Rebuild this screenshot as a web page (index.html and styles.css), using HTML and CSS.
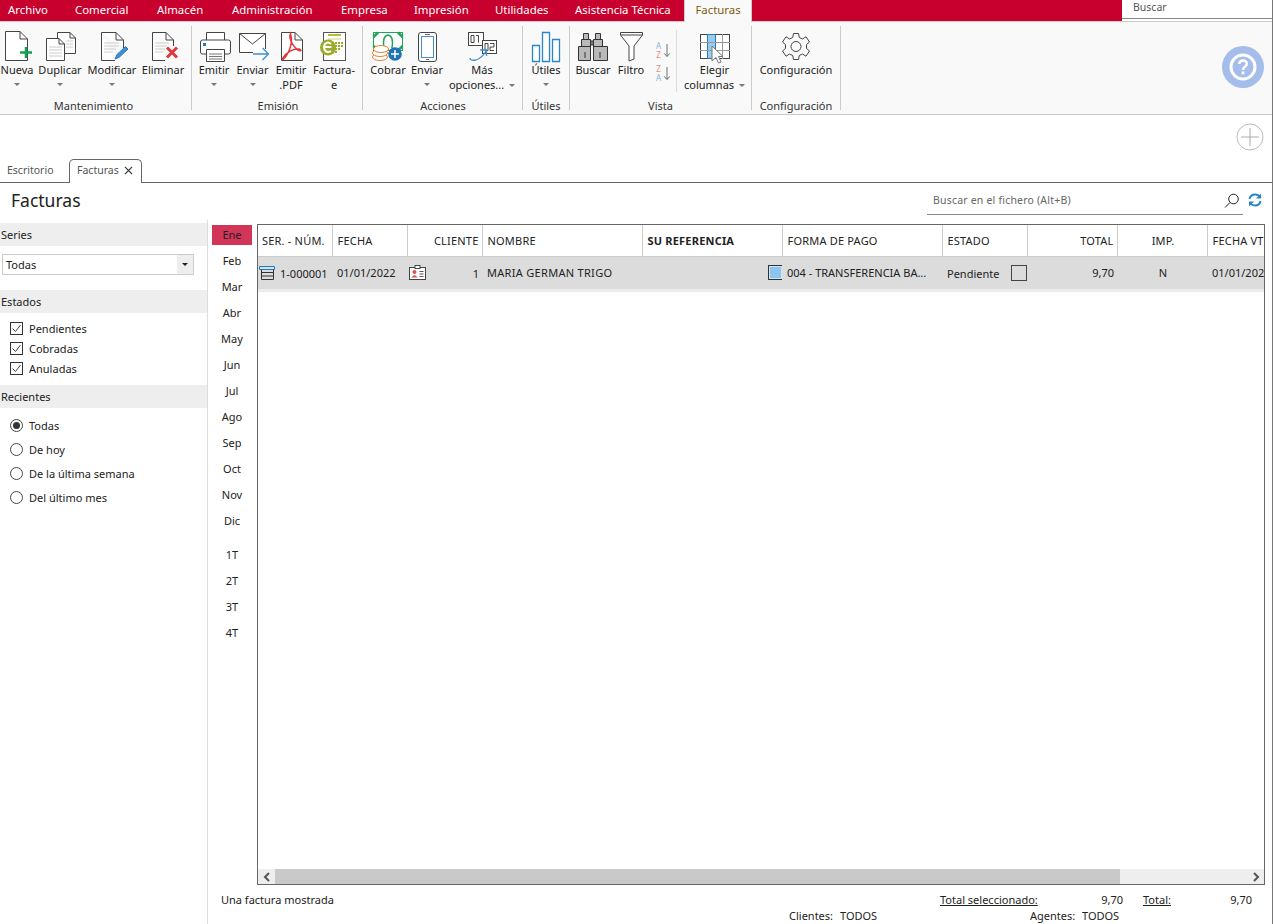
FILE: index.html
```html
<!DOCTYPE html>
<html lang="es">
<head>
<meta charset="utf-8">
<title>Facturas</title>
<link rel="stylesheet" href="styles.css">
</head>
<body>
<div class="app">
  <nav class="menubar">
    <a class="m m-archivo">Archivo</a><a class="m m-comercial">Comercial</a><a class="m m-almacen">Almacén</a><a class="m m-admin">Administración</a><a class="m m-empresa">Empresa</a><a class="m m-impresion">Impresión</a><a class="m m-util">Utilidades</a><a class="m m-asist">Asistencia Técnica</a><a class="m m-fact">Facturas</a>
    <div class="mspacer"></div>
    <div class="topsearch"><div class="tsbox">Buscar</div></div>
  </nav>
  <section class="ribbon">
    <div class="group g1">
      <div class="btns">
        <div class="btn w34"><svg class="ico" viewBox="0 0 36 32"><path class="pg" d="M6.5 1.5H21L28.5 9V30.500H6.500Z M21 1.500V9H28.500"/><path d="M27 17V28M21 22.500H33" stroke="#12a150" stroke-width="2.500" fill="none"/></svg><span>Nueva</span><i class="car"></i></div>
        <div class="btn w52"><svg class="ico" viewBox="0 0 36 32"><path class="pg" d="M15.500 8V2.500H28L33.500 8V23.500H22.500 M28 2.500V8H33.500"/><path class="lt" d="M24 11H31M24 14H31M24 17H31"/><path class="pg" d="M4.500 8.500H17L22.500 14V30.500H4.500Z M17 8.500V14H22.500"/><path class="lt" d="M7 17H20M7 20H20M7 23H20M7 26H20"/></svg><span>Duplicar</span><i class="car"></i></div>
        <div class="btn w52"><svg class="ico" viewBox="0 0 36 32"><path class="pg" d="M7.500 2.500H22L29.500 10V18M21 30.500H7.500V2.500 M22 2.500V10H29.500"/><path class="lt" d="M10 13H25M10 16H25M10 19H22M10 22H19"/><path d="M21 29L23 24.500L31.500 16.500L34 19L25.500 27Z" fill="#3f8fd2" stroke="#2a78bd"/></svg><span>Modificar</span><i class="car"></i></div>
        <div class="btn w50"><svg class="ico" viewBox="0 0 36 32"><path class="pg" d="M7.500 2.500H21L28.500 10V16M20 30.500H7.500V2.500 M21 2.500V10H28.500"/><path class="lt" d="M10 13H24M10 16H22M10 19H20M10 22H18"/><path d="M22 17.500L32 27.500M32 17.500L22 27.500" stroke="#e0383c" stroke-width="3" fill="none"/></svg><span>Eliminar</span></div>
      </div>
      <div class="glabel">Mantenimiento</div>
    </div>
    <div class="group g2">
      <div class="btns">
        <div class="btn w42"><svg class="ico" viewBox="0 0 36 32"><path class="pg" d="M10.500 10V2.500H28.500V10"/><path class="pg" d="M10 24H6.500Q4.500 24 4.500 22V12Q4.500 10 6.500 10H32.500Q34.500 10 34.500 12V22Q34.500 24 32.500 24H29"/><rect x="7" y="13" width="3" height="3" fill="#2a78bd"/><path class="pg" d="M10.500 19.500H28.500V31.500H10.500Z"/><path d="M13 24H26M13 26.500H26M13 29H26" stroke="#777" fill="none"/></svg><span>Emitir</span><i class="car"></i></div>
        <div class="btn w35"><svg class="ico" viewBox="0 0 36 32"><path class="pg" d="M30.500 19V3.500H4.500V22.500H18 M4.500 3.500L17.500 14L30.500 3.500"/><path d="M18 24H33M27.500 18L33.500 24L27.500 30" stroke="#3f8fd2" stroke-width="1.300" fill="none"/></svg><span>Enviar</span><i class="car"></i></div>
        <div class="btn w42"><svg class="ico" viewBox="0 0 36 32"><path class="pg" d="M8.500 2.500H22L29.500 10V30.500H8.500Z M22 2.500V10H29.500"/><path d="M17.500 3.500C15.500 8 19 15 24 19.500C27 22 30 20 26 19C20 18.500 13.500 22 10 28C8 31 12 29 15 23C17.500 18 19.500 10 17.500 3.500Z" fill="none" stroke="#e0383c" stroke-width="1.500"/></svg><span>Emitir<br>.PDF</span></div>
        <div class="btn w44"><svg class="ico" viewBox="0 0 36 32"><rect x="7.500" y="2.500" width="22" height="28" fill="#fff" stroke="#555"/><path d="M12 5H25" stroke="#b3c035" stroke-width="2"/><path d="M12 9H25" stroke="#c9d26b" stroke-width="1"/><circle cx="12" cy="17.500" r="8" fill="#9bab2a"/><path d="M8.500 17H15.500M15 14Q12 11 9 14Q7 18 9.500 21Q12 23 15 21" stroke="#fff" stroke-width="2" fill="none"/><g fill="#9bab2a"><rect x="19" y="12" width="2" height="2"/><rect x="22" y="12" width="2" height="2"/><rect x="25" y="12" width="2" height="2"/><rect x="19" y="15" width="2" height="2"/><rect x="22" y="15" width="2" height="2"/><rect x="25" y="15" width="2" height="2"/><rect x="19" y="18" width="2" height="2"/><rect x="22" y="18" width="2" height="2"/><rect x="19" y="21" width="2" height="2"/></g></svg><span>Factura-<br>e</span></div>
      </div>
      <div class="glabel">Emisión</div>
    </div>
    <div class="group g3">
      <div class="btns">
        <div class="btn w40"><svg class="ico" viewBox="0 0 36 32"><rect x="3.500" y="2.500" width="29" height="18" fill="#fff" stroke="#1fa45b"/><path d="M3.500 7L8 2.500M28 2.500L32.500 7M3.500 16L8 20.500M28 20.500L32.500 16" stroke="#1fa45b" stroke-width="2.500"/><path d="M14 18Q12 6 18 5Q24 6 22 18" fill="none" stroke="#1fa45b" stroke-width="1.500"/><g fill="#fff" stroke="#e87f2e"><ellipse cx="10" cy="27" rx="7.500" ry="3.500"/><ellipse cx="10" cy="23" rx="7.500" ry="3.500"/><ellipse cx="11" cy="19" rx="7.500" ry="3.500"/></g><circle cx="25" cy="24" r="6.800" fill="#1e73b4"/><path d="M25 20V28M21 24H29" stroke="#fff" stroke-width="1.500"/></svg><span>Cobrar</span></div>
        <div class="btn w38"><svg class="ico" viewBox="0 0 36 32"><rect x="9.500" y="2.500" width="18" height="29" rx="2.500" fill="#fff" stroke="#444"/><rect x="12.500" y="6.500" width="12" height="21" fill="#fff" stroke="#3f8fd2"/><path d="M16 4.500H21M17 29.500H20" stroke="#666"/></svg><span>Enviar</span><i class="car"></i></div>
        <div class="btn w72"><svg class="ico" viewBox="0 0 36 32"><rect x="4.500" y="2.500" width="15" height="13" fill="#fff" stroke="#444"/><path d="M7 5.500H10V12.500H7ZM12 5.500H14.500V12.500" fill="none" stroke="#444"/><rect x="18.500" y="10.500" width="14" height="13" fill="#fff" stroke="#444"/><path d="M21 13.500H24V20.500H21ZM26 13.500H30V17H26V20.500H30" fill="none" stroke="#444"/><path d="M6 28Q6 31 12 30Q18 28 22 21M16 20H22.500V26" fill="none" stroke="#3f8fd2" stroke-width="1.300"/></svg><span>Más<br>opciones... <i class="car inl"></i></span></div>
      </div>
      <div class="glabel">Acciones</div>
    </div>
    <div class="group g4">
      <div class="btns">
        <div class="btn w46"><svg class="ico" viewBox="0 0 36 32"><path d="M4.500 15.500H11.500V31.500H4.500ZM14.500 2.500H21.500V31.500H14.500ZM24.500 9.500H31.500V31.500H24.500Z" fill="#fff" stroke="#2a85c9" stroke-width="1.300"/></svg><span>Útiles</span><i class="car"></i></div>
      </div>
      <div class="glabel">Útiles</div>
    </div>
    <div class="group g5">
      <div class="btns">
        <div class="btn w46"><svg class="ico" viewBox="0 0 36 32"><path d="M8.500 3.500H13.500V9.500H8.500ZM20.500 3.500H25.500V9.500H20.500Z M6.500 9.500H15.500V16.500H6.500ZM18.500 9.500H27.500V16.500H18.500Z M3.500 16.500H15.500V30.500H3.500ZM18.500 16.500H32.500V30.500H18.500Z" fill="#b9b9b9" stroke="#333"/><path d="M15.500 11H18.500V15H15.500Z" fill="#777" stroke="#333"/><path d="M10 22V28M25 22V28" stroke="#333"/></svg><span>Buscar</span></div>
        <div class="btn w30"><svg class="ico" viewBox="0 0 36 32"><path d="M7.500 2.500H29.500V5L21 16V29L16 31V16L7.500 5Z M7.500 5H29.500" fill="#fff" stroke="#444"/></svg><span>Filtro</span></div>
        <div class="sorts"><div class="sort"><span class="az"><b class="sa">A</b><b class="sz">Z</b></span><svg class="arr" viewBox="0 0 8 16"><path d="M4 1V14M1 11L4 14.500L7 11" fill="none" stroke="#666"/></svg></div><div class="sort"><span class="az"><b class="sz">Z</b><b class="sa">A</b></span><svg class="arr" viewBox="0 0 8 16"><path d="M4 1V14M1 11L4 14.500L7 11" fill="none" stroke="#666"/></svg></div></div>
        <div class="btn w74 sepl"><svg class="ico" viewBox="0 0 36 32"><rect x="3.500" y="4.500" width="29" height="24" fill="#fff" stroke="#444"/><rect x="10.500" y="4.500" width="8" height="24" fill="#9accee" stroke="#2a78bd"/><path d="M3 12.500H33M3 20.500H33M25.500 4V29" stroke="#999" fill="none"/><path d="M15 16V31L19 27.500L21.500 33L24 32L21.500 26.500H26Z" fill="#fff" stroke="#777"/></svg><span>Elegir<br>columnas <i class="car inl"></i></span></div>
      </div>
      <div class="glabel">Vista</div>
    </div>
    <div class="group g6">
      <div class="btns">
        <div class="btn w88"><svg class="ico" viewBox="0 0 36 32"><path d="M15.500 3.500H20.500L21.300 7.500L24.500 9L28 6.800L31.500 12L28.500 14.500V18.500L31.500 21L28 26.200L24.500 24L21.300 25.500L20.500 29.500H15.500L14.700 25.500L11.500 24L8 26.200L4.500 21L7.500 18.500V14.500L4.500 12L8 6.800L11.500 9L14.700 7.500Z" fill="none" stroke="#444" stroke-linejoin="round"/><circle cx="18" cy="16.500" r="5" fill="none" stroke="#444"/></svg><span>Configuración</span></div>
      </div>
      <div class="glabel">Configuración</div>
    </div>
    <div class="help"><svg viewBox="0 0 42 42" class="helpico"><circle cx="21" cy="21" r="21" fill="#a5bdeb"/><circle cx="21" cy="21" r="12" fill="none" stroke="#fff" stroke-width="3"/><path d="M17.300 18Q17.500 14.500 21 14.500Q24.800 14.500 24.800 17.800Q24.800 19.800 22.800 20.800Q21 21.800 21 24" fill="none" stroke="#fff" stroke-width="2.500"/><rect x="19.600" y="25.500" width="2.800" height="2.800" fill="#fff"/></svg></div>
  </section>
  <div class="strip"><svg class="addico" viewBox="0 0 28 28"><circle cx="14" cy="14" r="13" fill="#fff" stroke="#bbb"/><path d="M14 5V23M5 14H23" stroke="#aaa"/></svg></div>
  <div class="tabs">
    <div class="tab">Escritorio</div>
    <div class="tab active">Facturas <svg class="x" viewBox="0 0 10 10"><path d="M1 1L9 9M9 1L1 9" stroke="#333" stroke-width="1.300"/></svg></div>
  </div>
  <header class="titlerow">
    <h1>Facturas</h1>
    <div class="fsearch"><span>Buscar en el fichero (Alt+B)</span><svg class="lens" viewBox="0 0 16 16"><circle cx="9.500" cy="6" r="4.800" fill="none" stroke="#222"/><path d="M6 9.500L1 14.500" stroke="#222"/></svg></div>
    <svg class="refresh" viewBox="0 0 14 14"><path d="M1.500 6Q2.500 1.500 7 1.500Q10 1.500 11.500 3.500M12.500 8Q11.500 12.500 7 12.500Q4 12.500 2.500 10.500" fill="none" stroke="#2a85c9" stroke-width="2"/><path d="M13 0.500V5.500H8ZM1 13.500V8.500H6Z" fill="#2a85c9"/></svg>
  </header>
  <div class="content">
    <aside class="side">
      <div class="sh">Series</div>
      <div class="select"><span>Todas</span><b class="selbtn"></b></div>
      <div class="sh sh2">Estados</div>
      <ul class="checks">
        <li><svg class="cb" viewBox="0 0 13 13"><rect x=".5" y=".5" width="12" height="12" fill="#fff" stroke="#333"/><path d="M2.500 6.500L5.500 9.500L10.500 3" fill="none" stroke="#444"/></svg>Pendientes</li>
        <li><svg class="cb" viewBox="0 0 13 13"><rect x=".5" y=".5" width="12" height="12" fill="#fff" stroke="#333"/><path d="M2.500 6.500L5.500 9.500L10.500 3" fill="none" stroke="#444"/></svg>Cobradas</li>
        <li><svg class="cb" viewBox="0 0 13 13"><rect x=".5" y=".5" width="12" height="12" fill="#fff" stroke="#333"/><path d="M2.500 6.500L5.500 9.500L10.500 3" fill="none" stroke="#444"/></svg>Anuladas</li>
      </ul>
      <div class="sh">Recientes</div>
      <ul class="radios">
        <li><i class="radio on"></i>Todas</li>
        <li><i class="radio"></i>De hoy</li>
        <li><i class="radio"></i>De la última semana</li>
        <li><i class="radio"></i>Del último mes</li>
      </ul>
    </aside>
    <div class="rightpane">
      <div class="work">
        <div class="months">
          <div class="mo on"><span>Ene</span></div><div class="mo"><span>Feb</span></div><div class="mo"><span>Mar</span></div><div class="mo"><span>Abr</span></div><div class="mo"><span>May</span></div><div class="mo"><span>Jun</span></div><div class="mo"><span>Jul</span></div><div class="mo"><span>Ago</span></div><div class="mo"><span>Sep</span></div><div class="mo"><span>Oct</span></div><div class="mo"><span>Nov</span></div><div class="mo"><span>Dic</span></div>
          <div class="mo q1"><span>1T</span></div><div class="mo"><span>2T</span></div><div class="mo"><span>3T</span></div><div class="mo"><span>4T</span></div>
        </div>
        <div class="gridbox">
          <div class="gridscroll">
            <table class="gt">
              <colgroup><col class="c74"><col class="c75"><col class="c75"><col class="c160"><col class="c140"><col class="c160"><col class="c85"><col class="c90"><col class="c90"><col class="c100"></colgroup>
              <thead><tr><th class="first">SER. - NÚM.</th><th>FECHA</th><th class="r">CLIENTE</th><th>NOMBRE</th><th class="bold">SU REFERENCIA</th><th>FORMA DE PAGO</th><th>ESTADO</th><th class="r">TOTAL</th><th class="ctr">IMP.</th><th>FECHA VTO.</th></tr></thead>
              <tbody><tr>
                <td class="num"><svg class="rowico" viewBox="0 0 16 14"><path d="M.5 .5H15.500V3.500H.5Z" fill="#cfe4f5" stroke="#2a78bd"/><path d="M2.500 3.500V13.500H14.500V3.500M2.500 6.500H14.500M2.500 10H14.500" fill="none" stroke="#333"/></svg><span>1-000001</span></td>
                <td>01/01/2022</td>
                <td class="r cli"><svg class="cardico" viewBox="0 0 17 15"><rect x=".5" y="2.500" width="16" height="12" fill="#fff" stroke="#444"/><rect x="6" y=".5" width="5" height="3" fill="#fff" stroke="#444"/><circle cx="5.500" cy="7" r="2" fill="#d9534f"/><path d="M2.500 12.500Q5.500 8 8.500 12.500Z" fill="#d9534f"/><path d="M10.500 6.500H14.500M10.500 9H14.500M10.500 11.500H14.500" stroke="#555"/></svg><span>1</span></td>
                <td class="nm">MARIA GERMAN TRIGO</td>
                <td class="refc"><i class="bluesq"></i></td>
                <td>004 - TRANSFERENCIA BA...</td>
                <td class="est"><span>Pendiente</span><i class="emptyb"></i></td>
                <td class="r">9,70</td>
                <td class="ctr">N</td>
                <td>01/01/2022</td>
              </tr></tbody>
            </table>
          </div>
          <div class="hscroll"><span class="chev"><svg class="chevico" viewBox="0 0 8 10"><path d="M6 1L2 5L6 9" fill="none" stroke="#555" stroke-width="2"/></svg></span><div class="thumb"></div><div class="track"></div><span class="chev"><svg class="chevico" viewBox="0 0 8 10"><path d="M2 1L6 5L2 9" fill="none" stroke="#555" stroke-width="2"/></svg></span></div>
        </div>
      </div>
      <footer class="foot">
        <div class="f1"><span class="shown">Una factura mostrada</span><u class="tsl">Total seleccionado:</u><span class="tsv">9,70</span><u class="tl">Total:</u><span class="tv">9,70</span></div>
        <div class="f2"><span class="cl">Clientes:</span><span class="clv">TODOS</span><span class="ag">Agentes:</span><span>TODOS</span></div>
      </footer>
    </div>
  </div>
</div>
</body>
</html>
```
FILE: styles.css
```css
* { box-sizing: border-box; }
html, body { margin: 0; padding: 0; }
body { width: 1273px; height: 924px; overflow: hidden; background: #fff; font-family: "Noto Sans", "Liberation Sans", sans-serif; font-size: 11px; color: #222; }
.app { position: relative; width: 1273px; height: 924px; border-right: 1px solid #777; display: flex; flex-direction: column; overflow: hidden; }

.menubar { height: 22px; flex: none; display: flex; background: #c8002e; color: #fff; border-bottom: 1px solid #c9c9c9; font-size: 11.4px; line-height: 20px; }
.m { display: block; white-space: nowrap; flex: none; }
.m-archivo { width: 75px; padding-left: 8px; }
.m-comercial { width: 82px; }
.m-almacen { width: 75px; }
.m-admin { width: 109px; }
.m-empresa { width: 73px; }
.m-impresion { width: 81px; }
.m-util { width: 80px; }
.m-asist { width: 109px; }
.m-fact { width: 68px; background: #f9f9f9; color: #7a5c10; text-align: center; height: 22px; border-left: 1px solid #ccc; border-right: 1px solid #ccc; }
.mspacer { width: 370px; flex: none; }
.topsearch { flex: 1; background: #fff; height: 21px; }
.tsbox { height: 19px; line-height: 15px; padding-left: 11px; color: #555; border-bottom: 1px solid #888; font-size: 10.5px; }

.ribbon { position: relative; height: 93px; flex: none; display: flex; background: #f9f9f9; border-bottom: 1px solid #c8c8c8; padding-top: 4px; }
.group { height: 84px; border-right: 1px solid #ccc; flex: none; display: flex; flex-direction: column; }
.g1 { width: 192px; }
.g2 { width: 171px; padding-left: 1px; }
.g3 { width: 160px; padding-left: 5px; }
.g4 { width: 47px; }
.g5 { width: 182px; }
.g6 { width: 89px; }
.btns { flex: 1; display: flex; align-items: flex-start; min-height: 0; }
.btn { flex: none; display: flex; flex-direction: column; align-items: center; text-align: center; line-height: 15px; padding-top: 4px; }
.btn span { white-space: nowrap; display: block; }
.ico { display: block; width: 36px; height: 32px; overflow: visible; }
.w30 { width: 30px; }
.w34 { width: 34px; }
.w35 { width: 35px; }
.w38 { width: 38px; }
.w40 { width: 40px; }
.w42 { width: 42px; }
.w44 { width: 44px; }
.w46 { width: 46px; }
.w50 { width: 50px; }
.w52 { width: 52px; }
.w72 { width: 72px; }
.w74 { width: 76px; }
.w88 { width: 88px; }
.pg { fill: #fff; stroke: #444; stroke-width: 1; }
.lt { fill: none; stroke: #ccc; stroke-width: 1; }
.car { display: block; width: 0; height: 0; margin-top: 6px; border-left: 3px solid transparent; border-right: 3px solid transparent; border-top: 3px solid #777; }
.car.inl { display: inline-block; margin: 0 0 2px 2px; vertical-align: middle; }
.glabel { height: 16px; padding-top: 4px; line-height: 16px; text-align: center; white-space: nowrap; color: #333; }
.g1 .glabel { padding-right: 4px; }
.g2 .glabel { padding-left: 1px; }
.g3 .glabel { margin-left: -4px; }
.sorts { width: 30px; flex: none; display: flex; flex-direction: column; gap: 5px; padding: 15px 0 0 8px; }
.sort { display: flex; align-items: center; height: 18px; }
.az { display: flex; flex-direction: column; width: 9px; font-size: 8px; line-height: 9px; text-align: center; }
.az b { font-weight: 400; display: block; }
.sa { color: #7db4e0; }
.sz { color: #f08585; }
.arr { width: 8px; height: 15px; display: block; }
.sepl { border-left: 1px solid #ddd; height: 62px; margin-top: 4px; padding-top: 0; }
.help { position: absolute; left: 1222px; top: 24px; width: 42px; height: 42px; }
.helpico { display: block; width: 42px; height: 42px; }

.strip { height: 45px; flex: none; display: flex; justify-content: flex-end; padding: 8px 8px 0 0; }
.addico { width: 28px; height: 28px; display: block; }

.tabs { height: 23px; flex: none; display: flex; align-items: flex-end; border-bottom: 1px solid #666; font-size: 10.5px; }
.tab { height: 22px; line-height: 20px; padding: 0 7px; color: #555; white-space: nowrap; }
.tab:first-child { width: 69px; }
.tab.active { position: relative; width: 73px; height: 24px; line-height: 20px; margin-bottom: -1px; padding: 0 0 3px 7px; background: #fff; border: 1px solid #666; border-bottom: 0; border-radius: 5px 5px 0 0; display: flex; gap: 5px; align-items: center; }
.x { width: 9px; height: 9px; display: block; }

.titlerow { height: 37px; flex: none; display: flex; align-items: flex-start; }
.titlerow h1 { margin: 4px 0 0 11px; font-weight: 400; font-size: 17.5px; line-height: 26px; width: 916px; color: #222; }
.fsearch { width: 316px; height: 25px; margin-top: 7px; padding: 0 3px 3px 6px; border-bottom: 1px solid #888; display: flex; align-items: center; justify-content: space-between; color: #666; font-size: 10.5px; letter-spacing: .2px; }
.fsearch span { margin-bottom: 2px; }
.lens { width: 16px; height: 16px; display: block; }
.refresh { width: 14px; height: 14px; margin: 10px 0 0 5px; display: block; }

.content { flex: 1; display: flex; min-height: 0; }
.side { width: 208px; flex: none; border-right: 1px solid #ddd; padding-top: 3px; }
.sh { height: 23px; line-height: 23px; width: 207px; padding-left: 1px; background: #eee; color: #222; }
.select { margin: 8px 0 15px 2px; width: 192px; height: 21px; border: 1px solid #ccc; display: flex; justify-content: space-between; line-height: 20px; padding-left: 3px; }
.selbtn { width: 16px; height: 19px; background: #eee; display: flex; align-items: center; justify-content: center; }
.selbtn::after { content: ""; border-left: 3px solid transparent; border-right: 3px solid transparent; border-top: 3px solid #222; }
ul { list-style: none; margin: 0; padding: 0; }
.checks { padding: 5px 0 7px 10px; }
.checks li { height: 20px; display: flex; align-items: center; gap: 6px; }
.cb { width: 13px; height: 13px; display: block; flex: none; }
.radios { padding: 5px 0 0 10px; }
.radios li { height: 24px; display: flex; align-items: center; gap: 6px; }
.radio { width: 13px; height: 13px; flex: none; border: 1px solid #444; border-radius: 50%; background: #fff; display: flex; align-items: center; justify-content: center; }
.radio.on::after { content: ""; width: 7px; height: 7px; border-radius: 50%; background: #333; }

.rightpane { flex: 1; min-width: 0; display: flex; flex-direction: column; }
.work { flex: 1; min-height: 0; display: flex; }
.months { width: 49px; flex: none; padding-top: 2px; }
.mo { height: 26px; display: flex; align-items: center; padding-left: 4px; }
.mo span { width: 40px; height: 20px; line-height: 20px; text-align: center; display: block; }
.mo.on span { background: #d13557; }
.mo.q1 { margin-top: 8px; }
.gridbox { width: 1008px; flex: none; margin-top: 4px; border: 1px solid #666; display: flex; flex-direction: column; min-height: 0; }
.gridscroll { flex: 1; min-height: 0; overflow: hidden; }
.gt { table-layout: fixed; width: 1049px; border-collapse: collapse; font-size: 11px; }
.c74 { width: 74px; }
.c75 { width: 75px; }
.c160 { width: 160px; }
.c140 { width: 140px; }
.c85 { width: 85px; }
.c90 { width: 90px; }
.c100 { width: 100px; }
.gt th { height: 31px; font-weight: 400; text-align: left; padding: 0 3px 0 5px; border-right: 1px solid #ccc; border-bottom: 1px solid #ccc; white-space: nowrap; overflow: hidden; letter-spacing: .2px; }
.gt th.first { padding-left: 4px; }
.gt th:last-child { border-right: 0; }
.gt th.bold { font-weight: 700; }
.gt .r { text-align: right; }
.gt .ctr { text-align: center; }
.gt td { height: 34px; padding: 0 3px 0 5px; background: #dcdcdc; border-bottom: 3px solid #ececec; white-space: nowrap; overflow: hidden; }
.gt td.nm { letter-spacing: .3px; }
.gt td.num { padding-left: 1px; }
.num span { margin-left: 5px; vertical-align: middle; }
.rowico { width: 16px; height: 14px; vertical-align: middle; }
.gt td.cli { padding-left: 2px; }
.cli span { vertical-align: middle; }
.cardico { float: left; width: 17px; height: 15px; margin-top: 1px; }
.gt td.refc { padding: 0 0 0 126px; }
.bluesq { display: block; width: 15px; height: 15px; background: #8ec5ee; border: 1px solid #333; box-shadow: inset 0 0 0 1px #cfe4f5; }
.gt td.est { padding-right: 0; }
.gt td.est span { margin-right: 12px; vertical-align: middle; }
.emptyb { display: inline-block; width: 16px; height: 16px; border: 1px solid #444; vertical-align: middle; }
.hscroll { height: 15px; flex: none; display: flex; background: #eee; }
.chev { width: 17px; flex: none; display: flex; align-items: center; justify-content: center; }
.chevico { width: 8px; height: 10px; display: block; }
.thumb { width: 845px; flex: none; height: 100%; background: #c9c9c9; }
.track { flex: 1; }
.foot { height: 39px; flex: none; font-size: 11px; padding-top: 7px; }
.f1 { height: 16px; line-height: 16px; display: flex; white-space: nowrap; padding-left: 13px; }
.shown { width: 719px; }
.tsl { width: 150px; }
.tsv { width: 33px; text-align: right; }
.tl { width: 69px; margin-left: 20px; flex: none; }
.tv { width: 40px; text-align: right; }
.f2 { height: 16px; line-height: 16px; display: flex; white-space: nowrap; padding-left: 581px; }
.cl { width: 51px; }
.clv { width: 190px; }
.ag { width: 52px; }
```
